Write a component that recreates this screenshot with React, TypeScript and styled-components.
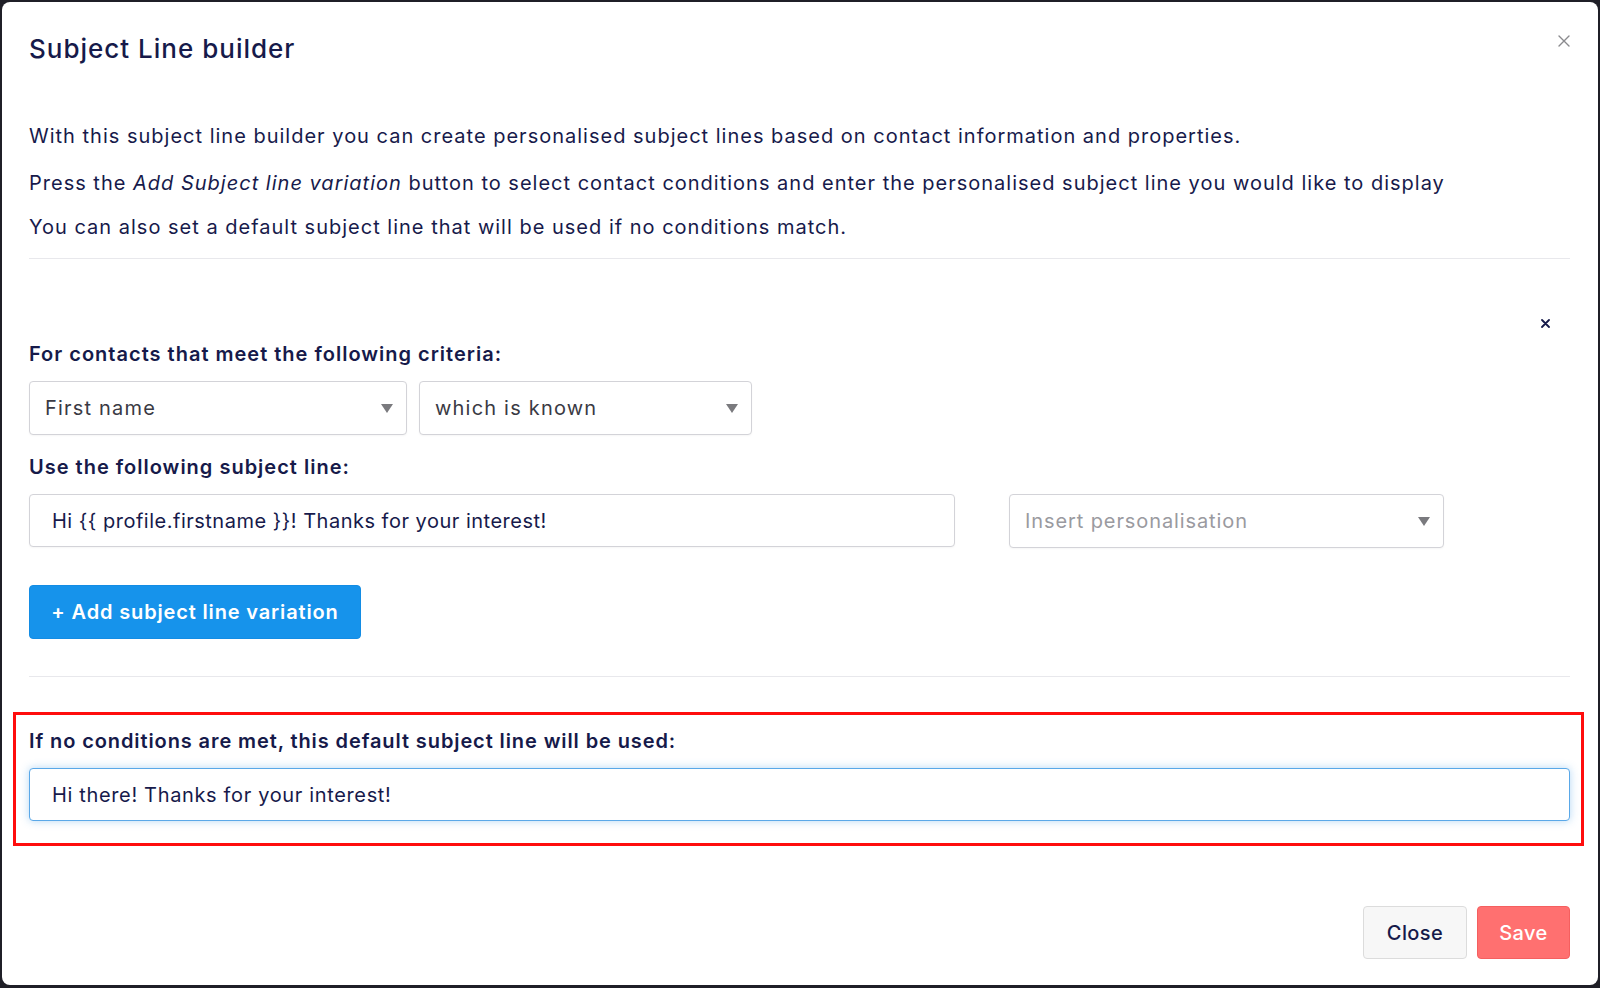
import React from "react";
import styled, { createGlobalStyle } from "styled-components";

const Global = createGlobalStyle`
  html, body { margin: 0; padding: 0; }
  body {
    background: #1f1f27;
    font-family: "Inter", "Noto Sans", sans-serif;
    color: #171a4b;
  }
  * { box-sizing: border-box; }
`;

const Backdrop = styled.div`
  width: 1600px;
  height: 988px;
  padding: 2px 2px 3px 2px;
`;

const Modal = styled.div`
  height: 983px;
  background: #ffffff;
  border-radius: 8px;
  display: flex;
  flex-direction: column;
  padding: 31px 28px 26px 27px;
`;

const Header = styled.div`
  display: flex;
  justify-content: space-between;
  align-items: flex-start;
`;

const Title = styled.h1`
  margin: 0;
  font-size: 26px;
  line-height: 32px;
  font-weight: 500;
  color: #161a4a;
  letter-spacing: 1px;
`;

const CloseIcon = styled.button`
  border: 0;
  background: none;
  padding: 0;
  margin: 1px -1px 0 0;
  width: 14px;
  height: 14px;
  display: flex;
  cursor: pointer;
`;

const Intro = styled.div`
  margin-top: 58px;
  display: flex;
  flex-direction: column;
`;

const Para = styled.p<{ $gap?: number }>`
  margin: 0 0 ${(p) => p.$gap ?? 0}px 0;
  font-size: 20px;
  line-height: 26px;
  font-weight: 400;
  color: #171a4b;
  letter-spacing: 1px;
  em { font-style: italic; }
`;

const Rule = styled.hr<{ $top: number }>`
  margin: ${(p) => p.$top}px 0 0 0;
  border: 0;
  border-top: 1px solid #e8e8ec;
  height: 0;
`;

const Variation = styled.div`
  display: flex;
  flex-direction: column;
`;

const RemoveRow = styled.div`
  display: flex;
  justify-content: flex-end;
  margin-top: 60px;
  padding-right: 20px;
`;

const Label = styled.div<{ $top: number; $ls?: number }>`
  margin-top: ${(p) => p.$top}px;
  font-size: 20px;
  line-height: 26px;
  font-weight: 600;
  color: #161a4a;
  letter-spacing: ${(p) => p.$ls ?? 1}px;
`;

const Row = styled.div<{ $gap: number; $top: number }>`
  display: flex;
  gap: ${(p) => p.$gap}px;
  margin-top: ${(p) => p.$top}px;
`;

const SelectBox = styled.div<{ $w: number; $placeholder?: boolean }>`
  width: ${(p) => p.$w}px;
  height: 54px;
  border: 1px solid #d3d3d8;
  border-radius: 4px;
  box-shadow: 0 1px 2px rgba(0, 0, 0, 0.04);
  display: flex;
  align-items: center;
  justify-content: space-between;
  padding: 0 13px 0 15px;
  font-size: 20px;
  letter-spacing: ${(p) => (p.$placeholder ? 0.9 : 1.2)}px;
  color: ${(p) => (p.$placeholder ? "#9a9aa0" : "#3a3a44")};
  background: #fff;
`;

const Caret = styled.span`
  width: 0;
  height: 0;
  border-left: 6.5px solid transparent;
  border-right: 6.5px solid transparent;
  border-top: 9px solid #7a7a7e;
`;

const TextInput = styled.div<{ $w?: number; $focus?: boolean }>`
  width: ${(p) => (p.$w ? `${p.$w}px` : "100%")};
  height: 53px;
  border: 1px solid ${(p) => (p.$focus ? "#5aa8e8" : "#d3d3d8")};
  border-radius: 4px;
  display: flex;
  align-items: center;
  padding: 1px 22px 0 22px;
  font-size: 20px;
  letter-spacing: ${(p) => (p.$focus ? 0.65 : 0.5)}px;
  color: #171a4b;
  background: #fff;
  box-shadow: ${(p) =>
    p.$focus ? "0 0 8px rgba(90, 168, 232, 0.45)" : "0 1px 2px rgba(0,0,0,0.04)"};
`;

const PrimaryButton = styled.button`
  align-self: flex-start;
  margin-top: 37px;
  width: 332px;
  height: 54px;
  border: 1px solid #138ce4;
  border-radius: 4px;
  background: #1693eb;
  color: #fff;
  font-family: inherit;
  font-size: 20px;
  font-weight: 600;
  letter-spacing: 0.85px;
  cursor: pointer;
`;

const Highlight = styled.div`
  margin: 35px -14px 0 -16px;
  border: 3px solid #ff0d0d;
  padding: 13px 11px 22px 13px;
  display: flex;
  flex-direction: column;
`;

const Footer = styled.div`
  margin-top: auto;
  display: flex;
  justify-content: flex-end;
  gap: 10px;
`;

const FooterButton = styled.button<{ $variant: "close" | "save" }>`
  height: 53px;
  width: ${(p) => (p.$variant === "close" ? 104 : 93)}px;
  border-radius: 4px;
  font-family: inherit;
  font-size: 20px;
  font-weight: 500;
  letter-spacing: 0.4px;
  cursor: pointer;
  border: 1px solid ${(p) => (p.$variant === "close" ? "#dcdcdc" : "#f55f5f")};
  background: ${(p) => (p.$variant === "close" ? "#f7f7f7" : "#ff7070")};
  color: ${(p) => (p.$variant === "close" ? "#161a4a" : "#ffffff")};
`;

export default function App() {
  return (
    <>
      <Global />
      <Backdrop>
        <Modal>
          <Header>
            <Title>Subject Line builder</Title>
            <CloseIcon aria-label="Close">
              <svg width="14" height="14" viewBox="0 0 14 14">
                <path d="M2 2 L12 12 M12 2 L2 12" stroke="#8a8a8e" strokeWidth="1.4" strokeLinecap="round" />
              </svg>
            </CloseIcon>
          </Header>
          <Intro>
            <Para $gap={21}>
              With this subject line builder you can create personalised subject lines based on contact information and properties.
            </Para>
            <Para $gap={18}>
              Press the <em>Add Subject line variation</em> button to select contact conditions and enter the personalised subject line you would like to display
            </Para>
            <Para>You can also set a default subject line that will be used if no conditions match.</Para>
          </Intro>
          <Rule $top={18} />
          <Variation>
            <RemoveRow>
              <svg width="9" height="9" viewBox="0 0 9 9">
                <path d="M1 1 L8 8 M8 1 L1 8" stroke="#161a4a" strokeWidth="1.8" strokeLinecap="round" />
              </svg>
            </RemoveRow>
            <Label $top={13}>For contacts that meet the following criteria:</Label>
            <Row $gap={12} $top={14}>
              <SelectBox $w={378}>
                First name
                <Caret />
              </SelectBox>
              <SelectBox $w={333}>
                which is known
                <Caret />
              </SelectBox>
            </Row>
            <Label $top={19}>Use the following subject line:</Label>
            <Row $gap={54} $top={14}>
              <TextInput $w={926}>Hi {"{{"} profile.firstname {"}}"}! Thanks for your interest!</TextInput>
              <SelectBox $w={435} $placeholder>
                Insert personalisation
                <Caret />
              </SelectBox>
            </Row>
            <PrimaryButton>+ Add subject line variation</PrimaryButton>
          </Variation>
          <Rule $top={37} />
          <Highlight>
            <Label $top={0} $ls={0.9}>If no conditions are met, this default subject line will be used:</Label>
            <Row $gap={0} $top={14}>
              <TextInput $focus>Hi there! Thanks for your interest!</TextInput>
            </Row>
          </Highlight>
          <Footer>
            <FooterButton $variant="close">Close</FooterButton>
            <FooterButton $variant="save">Save</FooterButton>
          </Footer>
        </Modal>
      </Backdrop>
    </>
  );
}
